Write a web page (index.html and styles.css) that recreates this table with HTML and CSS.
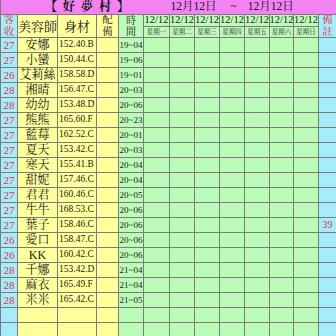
FILE: index.html
```html
<!DOCTYPE html>
<html lang="zh-Hant">
<head>
<meta charset="utf-8">
<title>好夢村</title>
<link rel="stylesheet" href="styles.css">
</head>
<body>
<div class="sheet">
  <div class="title"><span class="name">【 好 夢 村 】</span><span class="range">12月12日<span class="tilde">~</span>12月12日</span></div>

  <div class="hk v"><span>客</span><span>收</span></div>
  <div class="hn">美容師</div>
  <div class="hs">身材</div>
  <div class="hp v"><span>配</span><span>備</span></div>
  <div class="ht v sp"><span>時</span><span>間</span></div>
  <div class="dd">12/12</div><div class="dd">12/12</div><div class="dd">12/12</div><div class="dd">12/12</div><div class="dd">12/12</div><div class="dd">12/12</div><div class="dd">12/12</div>
  <div class="hr v"><span>備</span><span>註</span></div>
  <div class="wd">星期一</div><div class="wd">星期二</div><div class="wd">星期三</div><div class="wd">星期四</div><div class="wd">星期五</div><div class="wd">星期六</div><div class="wd">星期日</div>

  <div class="k">27</div><div class="n">安娜</div><div class="h">152.40.B</div><div class="p"></div><div class="t">19~04</div><div class="d"></div><div class="d"></div><div class="d"></div><div class="d"></div><div class="d"></div><div class="d"></div><div class="d"></div><div class="r"></div>
  <div class="k">27</div><div class="n">小蠻</div><div class="h">150.44.C</div><div class="p"></div><div class="t">19~06</div><div class="d"></div><div class="d"></div><div class="d"></div><div class="d"></div><div class="d"></div><div class="d"></div><div class="d"></div><div class="r"></div>
  <div class="k">26</div><div class="n">艾莉絲</div><div class="h">158.58.D</div><div class="p"></div><div class="t">19~01</div><div class="d"></div><div class="d"></div><div class="d"></div><div class="d"></div><div class="d"></div><div class="d"></div><div class="d"></div><div class="r"></div>
  <div class="k">28</div><div class="n">湘晴</div><div class="h">156.47.C</div><div class="p"></div><div class="t">20~03</div><div class="d"></div><div class="d"></div><div class="d"></div><div class="d"></div><div class="d"></div><div class="d"></div><div class="d"></div><div class="r"></div>
  <div class="k">28</div><div class="n">幼幼</div><div class="h">153.48.D</div><div class="p"></div><div class="t">20~06</div><div class="d"></div><div class="d"></div><div class="d"></div><div class="d"></div><div class="d"></div><div class="d"></div><div class="d"></div><div class="r"></div>
  <div class="k">27</div><div class="n">熊熊</div><div class="h">165.60.F</div><div class="p"></div><div class="t">20~23</div><div class="d"></div><div class="d"></div><div class="d"></div><div class="d"></div><div class="d"></div><div class="d"></div><div class="d"></div><div class="r"></div>
  <div class="k">27</div><div class="n">藍莓</div><div class="h">162.52.C</div><div class="p"></div><div class="t">20~01</div><div class="d"></div><div class="d"></div><div class="d"></div><div class="d"></div><div class="d"></div><div class="d"></div><div class="d"></div><div class="r"></div>
  <div class="k">27</div><div class="n">夏天</div><div class="h">153.42.C</div><div class="p"></div><div class="t">20~03</div><div class="d"></div><div class="d"></div><div class="d"></div><div class="d"></div><div class="d"></div><div class="d"></div><div class="d"></div><div class="r"></div>
  <div class="k">27</div><div class="n">寒天</div><div class="h">155.41.B</div><div class="p"></div><div class="t">20~04</div><div class="d"></div><div class="d"></div><div class="d"></div><div class="d"></div><div class="d"></div><div class="d"></div><div class="d"></div><div class="r"></div>
  <div class="k">27</div><div class="n">甜妮</div><div class="h">157.46.C</div><div class="p"></div><div class="t">20~04</div><div class="d"></div><div class="d"></div><div class="d"></div><div class="d"></div><div class="d"></div><div class="d"></div><div class="d"></div><div class="r"></div>
  <div class="k">27</div><div class="n">君君</div><div class="h">160.46.C</div><div class="p"></div><div class="t">20~05</div><div class="d"></div><div class="d"></div><div class="d"></div><div class="d"></div><div class="d"></div><div class="d"></div><div class="d"></div><div class="r"></div>
  <div class="k">27</div><div class="n">牛牛</div><div class="h">168.53.C</div><div class="p"></div><div class="t">20~06</div><div class="d"></div><div class="d"></div><div class="d"></div><div class="d"></div><div class="d"></div><div class="d"></div><div class="d"></div><div class="r"></div>
  <div class="k">27</div><div class="n">葉子</div><div class="h">158.46.C</div><div class="p"></div><div class="t">20~06</div><div class="d"></div><div class="d"></div><div class="d"></div><div class="d"></div><div class="d"></div><div class="d"></div><div class="d"></div><div class="r">39</div>
  <div class="k">26</div><div class="n">愛口</div><div class="h">158.47.C</div><div class="p"></div><div class="t">20~06</div><div class="d"></div><div class="d"></div><div class="d"></div><div class="d"></div><div class="d"></div><div class="d"></div><div class="d"></div><div class="r"></div>
  <div class="k">26</div><div class="n">KK</div><div class="h">160.42.C</div><div class="p"></div><div class="t">20~06</div><div class="d"></div><div class="d"></div><div class="d"></div><div class="d"></div><div class="d"></div><div class="d"></div><div class="d"></div><div class="r"></div>
  <div class="k">28</div><div class="n">千娜</div><div class="h">153.42.D</div><div class="p"></div><div class="t">21~04</div><div class="d"></div><div class="d"></div><div class="d"></div><div class="d"></div><div class="d"></div><div class="d"></div><div class="d"></div><div class="r"></div>
  <div class="k">28</div><div class="n">麻衣</div><div class="h">165.49.F</div><div class="p"></div><div class="t">21~04</div><div class="d"></div><div class="d"></div><div class="d"></div><div class="d"></div><div class="d"></div><div class="d"></div><div class="d"></div><div class="r"></div>
  <div class="k">28</div><div class="n">米米</div><div class="h">165.42.C</div><div class="p"></div><div class="t">21~05</div><div class="d"></div><div class="d"></div><div class="d"></div><div class="d"></div><div class="d"></div><div class="d"></div><div class="d"></div><div class="r"></div>
  <div class="k"></div><div class="n"></div><div class="h"></div><div class="p"></div><div class="t"></div><div class="d"></div><div class="d"></div><div class="d"></div><div class="d"></div><div class="d"></div><div class="d"></div><div class="d"></div><div class="r"></div>
  <div class="k"></div><div class="n"></div><div class="h"></div><div class="p"></div><div class="t"></div><div class="d"></div><div class="d"></div><div class="d"></div><div class="d"></div><div class="d"></div><div class="d"></div><div class="d"></div><div class="r"></div>
</div>
</body>
</html>
```

FILE: styles.css
```css
html, body {
  margin: 0;
  padding: 0;
  background: #ffffff;
}

body {
  font-family: "Liberation Serif", "Noto Serif CJK TC", "Noto Sans CJK TC", serif;
  color: #222;
}

.sheet {
  display: grid;
  grid-template-columns: 16px 39px 38px 21px 24px 25px 24px 24px 24px 24px 23px 24px 17px;
  grid-template-rows: 14px 11px 10px repeat(20, 14px);
  gap: 1px;
  padding-left: 1px;
  background: #7c7c7c;
  width: 336px;
  height: 336px;
  box-sizing: border-box;
  overflow: hidden;
}

.sheet > div {
  display: flex;
  align-items: center;
  justify-content: center;
  white-space: nowrap;
  overflow: hidden;
  line-height: 1;
}

.sheet > .title {
  grid-column: 1 / -1;
  background: #f383f3;
  justify-content: flex-start;
  font-size: 12px;
  color: #111;
}

.title .name {
  margin-left: 44px;
  font-weight: bold;
  letter-spacing: 1.5px;
}

.title .range {
  margin-left: 40px;
  font-size: 11.5px;
}

.title .tilde {
  margin: 0 11px 0 14px;
}

/* header cells */
.sheet > .hk,
.sheet > .hn,
.sheet > .hs,
.sheet > .hp,
.sheet > .ht,
.sheet > .hr {
  grid-row: span 2;
}

.sheet > .v {
  flex-direction: column;
  font-size: 10.5px;
  gap: 1px;
}

.sheet > .sp {
  justify-content: space-between;
  font-size: 10px;
  padding: 1px 0 0;
}

.hk, .k {
  background: #a6ecfa;
  color: #e0304a;
}

.hr, .r {
  background: #a6ecfa;
  color: #e0304a;
}

.hn, .hs {
  background: #ffff9c;
  font-size: 13px;
}

.hp, .p, .n, .h {
  background: #ffff9c;
}

.ht, .t, .d, .dd, .wd {
  background: #bcfcb8;
}

.sheet > .dd {
  font-size: 10.5px;
}

.sheet > .wd {
  font-size: 6.5px;
  color: #333;
}

/* data cells */
.sheet > .k {
  font-size: 11px;
}

.sheet > .n {
  font-size: 12px;
}

.sheet > .h {
  justify-content: flex-start;
  padding-left: 1px;
  font-size: 9.5px;
}

.sheet > .t {
  font-size: 9px;
}

.sheet > .r {
  font-size: 10px;
}
```
